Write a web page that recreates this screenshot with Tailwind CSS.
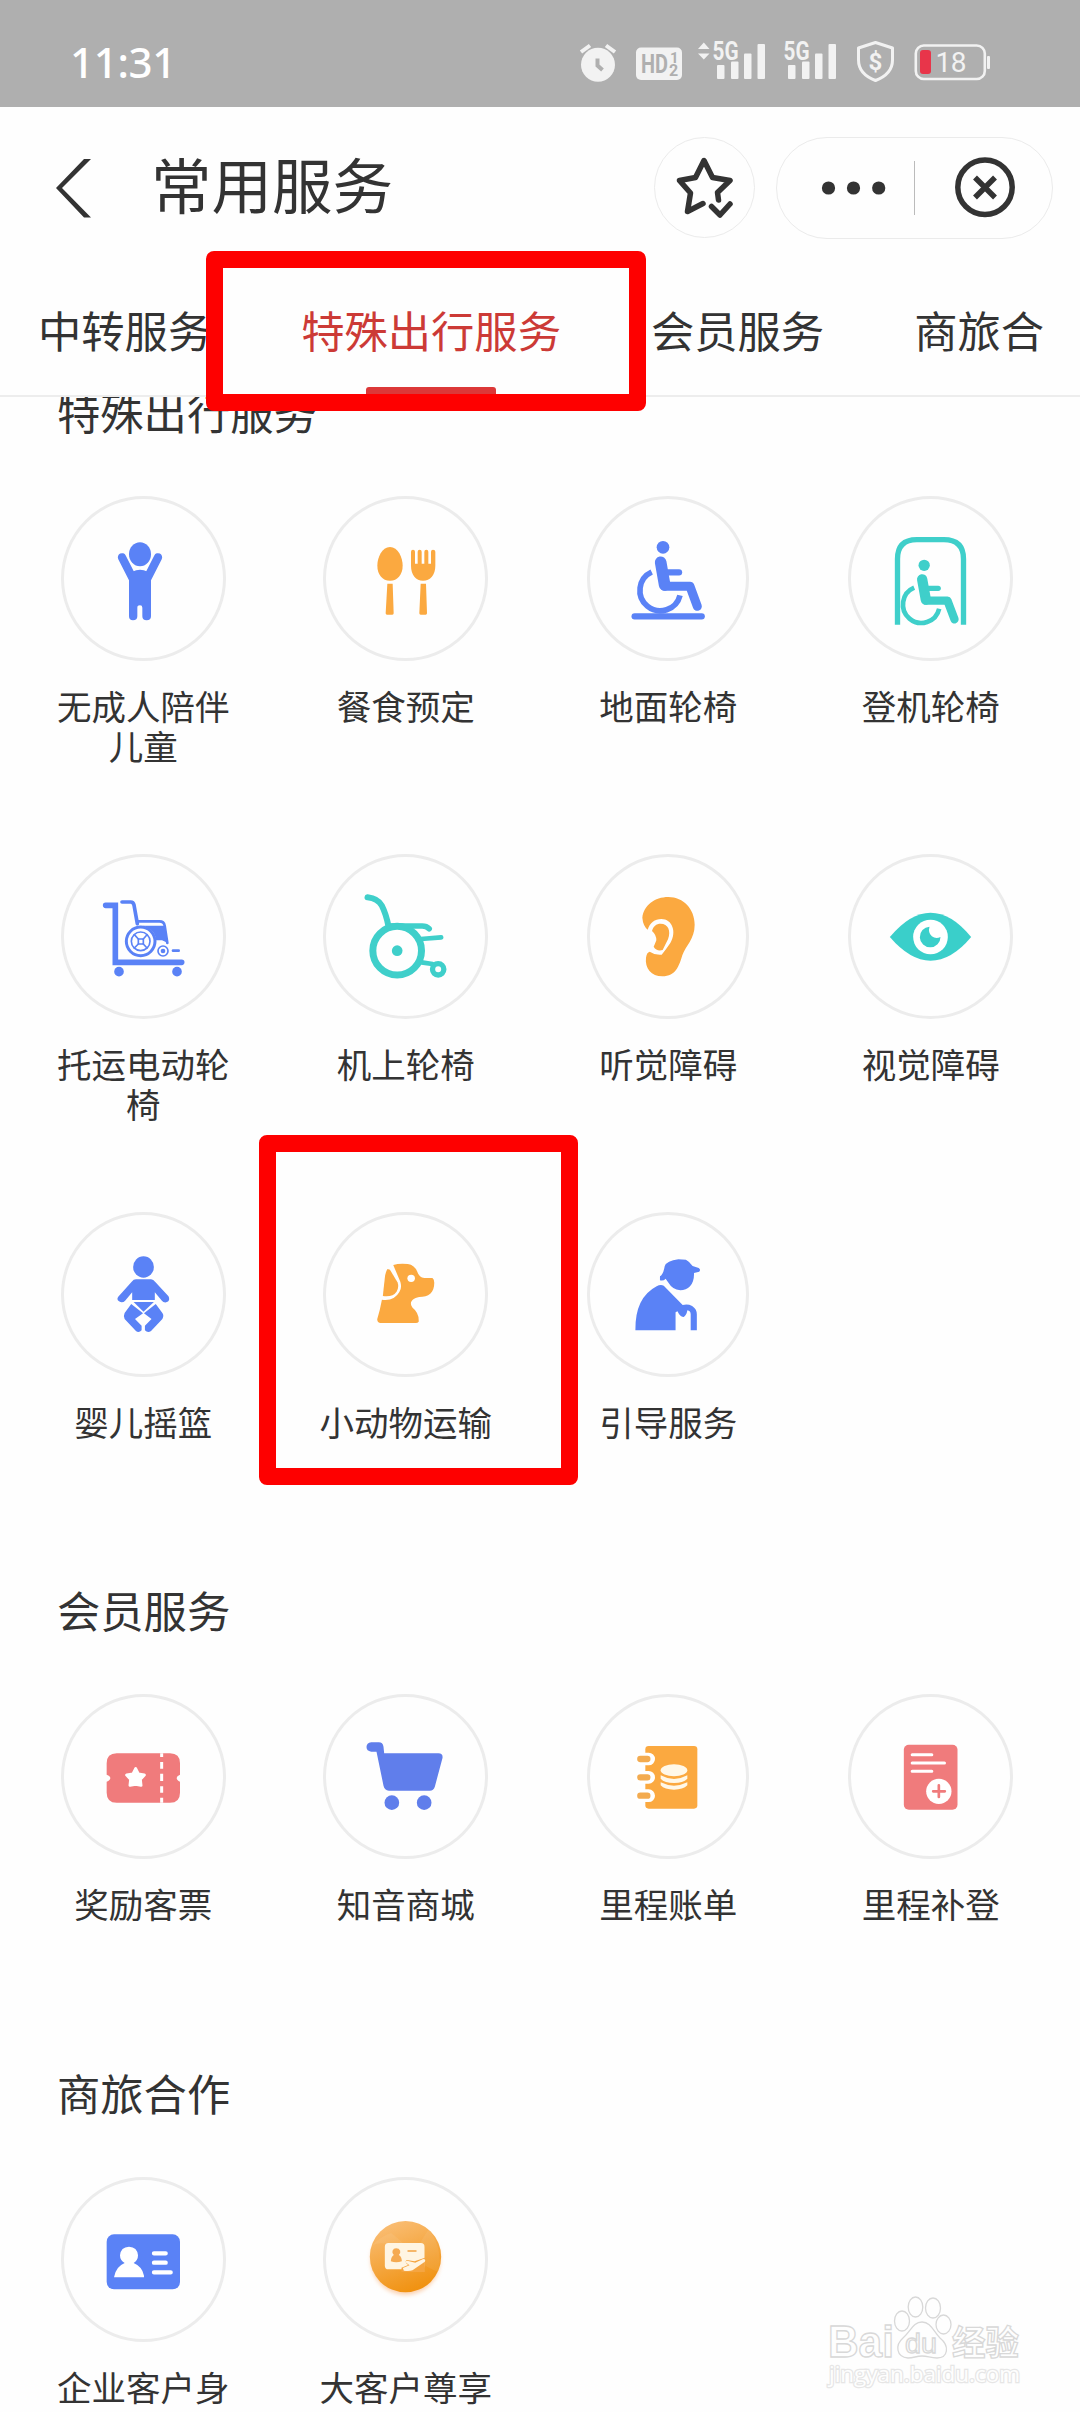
<!DOCTYPE html>
<html lang="zh-CN">
<head>
<meta charset="utf-8">
<title>常用服务</title>
<script src="https://cdn.jsdelivr.net/npm/@tailwindcss/browser@4"></script>
</head>
<body class="bg-white">
<div class="relative flex h-[2412px] w-[1080px] flex-col overflow-hidden bg-[#fefefe] font-['Noto_Sans_CJK_SC',sans-serif] text-[#333]">

  <!-- status bar -->
  <div class="flex h-[107px] w-full shrink-0 items-start justify-between bg-[#afafaf] pl-[70px] pr-[85px] pt-[35px]">
    <span class="font-['Noto_Sans',sans-serif] text-[42px] leading-[54px] font-medium tracking-[-0.3px] text-white">11:31</span>
    <svg class="h-[52px] w-[420px]" viewBox="575 35 420 52" fill="#f2f2f2">
      <circle cx="598" cy="64.7" r="17"/>
      <path d="M581 52 L590 45.500 M606 45.500 L615 52" stroke="#f2f2f2" stroke-width="4" fill="none"/>
      <path d="M597.500 58.500 V65.500 L602.500 70" stroke="#afafaf" stroke-width="4" fill="none"/>
      <rect x="636" y="47.500" width="46" height="32.500" rx="5"/>
      <g fill="#afafaf" font-family="Roboto, sans-serif" font-weight="700">
        <text x="641" y="73" font-size="25" textLength="27" lengthAdjust="spacingAndGlyphs">HD</text>
        <text x="670" y="63" font-size="15">1</text>
        <text x="669" y="76" font-size="16">2</text>
      </g>
      <path d="M698 49 L703.800 42.500 L709.500 49Z M698 53.500 H709.500 L703.800 59.500Z"/>
      <g font-family="Roboto, sans-serif" font-weight="700" font-size="25">
        <text x="712.500" y="60" textLength="26" lengthAdjust="spacingAndGlyphs">5G</text>
        <text x="783.500" y="60" textLength="26" lengthAdjust="spacingAndGlyphs">5G</text>
      </g>
      <rect x="717" y="65" width="7.500" height="14" rx="1"/><rect x="731" y="61.500" width="7.500" height="17.500" rx="1"/><rect x="744" y="53.500" width="7.500" height="25.500" rx="1"/><rect x="757.500" y="44" width="7.500" height="35" rx="1"/>
      <rect x="788" y="65" width="7.500" height="14" rx="1"/><rect x="802" y="61.500" width="7.500" height="17.500" rx="1"/><rect x="815" y="53.500" width="7.500" height="25.500" rx="1"/><rect x="828.500" y="44" width="7.500" height="35" rx="1"/>
      <path d="M875.500 42.500 L892.500 48 V60 Q892.500 74 875.500 80.500 Q858.500 74 858.500 60 V48Z" fill="none" stroke="#f2f2f2" stroke-width="3" stroke-linejoin="round"/>
      <text x="875.500" y="70" text-anchor="middle" font-family="Roboto, sans-serif" font-weight="700" font-size="24">$</text>
      <rect x="915.800" y="45.500" width="69" height="33.500" rx="8" fill="none" stroke="#f2f2f2" stroke-width="2.600"/>
      <rect x="920" y="50" width="11" height="24" rx="3" fill="#e8354a"/>
      <text x="935.500" y="72" font-family="Roboto, sans-serif" font-size="28" textLength="31">18</text>
      <rect x="987" y="56" width="3" height="13" rx="1"/>
    </svg>
  </div>

  <!-- title bar -->
  <div class="flex h-[161px] shrink-0 items-start pt-[30px]">
    <svg class="ml-[55px] mt-[20px] h-[62px] w-[38px]" viewBox="55 157 38 62"><path d="M56 188 L84 159 H91 L62 188 L91 217.500 H84Z" fill="#333"/></svg>
    <h1 class="ml-[58px] mt-[1px] w-[400px] text-[60.500px] leading-[90px] font-normal">常用服务</h1>
    <div class="ml-[103px] h-[101px] w-[101px] rounded-full border border-[#ebebeb]">
      <svg class="h-full w-full" viewBox="655 138 99 99" fill="none" stroke="#333" stroke-width="5.500" stroke-linecap="round" stroke-linejoin="round">
        <path d="M718.500 200 L717.500 192.500 L730 180.500 L712.500 177.500 L704 160.500 L695.500 177.500 L679.500 180.500 L690.500 193 L687.500 211.500 L703 203.500"/>
        <path d="M711.500 206.500 L720 215 L730 204"/>
      </svg>
    </div>
    <div class="ml-[21px] h-[102px] w-[277px] rounded-full border border-[#ebebeb]">
      <svg class="h-full w-full" viewBox="777 138 275 100" fill="#333">
        <circle cx="828.500" cy="188" r="6.600"/><circle cx="853.500" cy="188" r="6.600"/><circle cx="878.700" cy="188" r="6.600"/>
        <path d="M914.500 161 V215" stroke="#bbb" stroke-width="1"/>
        <circle cx="985" cy="187.300" r="27.200" fill="none" stroke="#333" stroke-width="5.500"/>
        <path d="M975 177.500 L995 197.500 M995 177.500 L975 197.500" stroke="#333" stroke-width="5.500"/>
      </svg>
    </div>
  </div>

  <!-- tabs -->
  <div class="h-[129px] shrink-0 border-b-2 border-[#ededed]">
    <div class="flex h-[127px] w-[1043px] gap-[90px] overflow-hidden whitespace-nowrap pl-[38px] pt-[30px] text-[43.300px] leading-[62px]">
      <span class="shrink-0">中转服务</span>
      <span class="flex shrink-0 flex-col items-center justify-between text-[#cc3a36]">特殊出行服务<i class="block h-[8px] w-[130px] rounded-t-[3px] bg-[#dc3838]"></i></span>
      <span class="shrink-0">会员服务</span>
      <span class="shrink-0">商旅合作</span>
    </div>
  </div>

  <!-- scrolled content -->
  <main class="h-[2015px] shrink-0 overflow-hidden">
    <h2 class="-mt-[17px] ml-[57px] h-[64px] text-[43.300px] leading-[62px] font-normal">特殊出行服务</h2>
    <section class="ml-[12px] mt-[52px] grid w-[1050px] auto-rows-[358px] grid-cols-4 text-center text-[34.500px] leading-[40.300px]">
      <div class="flex flex-col items-center gap-[24px]">
        <div class="h-[165px] w-[165px] shrink-0 rounded-full border-[3px] border-[#ececec]"><svg class="h-full w-full" viewBox="72 56 477 477" fill="#5a82f6">
          <ellipse cx="300" cy="222" rx="33" ry="36"/>
          <path d="M246 231 L280 298 M354 231 L320 298" stroke="#5a82f6" stroke-width="25" stroke-linecap="round"/>
          <path d="M267 300 L277 274 Q300 262 323 274 L333 300 V408 Q333 420 320 420 Q307 420 307 408 V382 Q307 375 300 375 Q292 375 292 382 V408 Q292 420 279 420 Q267 420 267 408Z"/>
        </svg></div><p class="w-[176px]">无成人陪伴儿童</p></div>
      <div class="flex flex-col items-center gap-[24px]">
        <div class="h-[165px] w-[165px] shrink-0 rounded-full border-[3px] border-[#ececec]"><svg class="h-full w-full" viewBox="862 56 477 477" fill="#fba940">
          <path d="M1054 200 C1078 200 1092 232 1092 256 C1092 282 1077 301 1054 301 C1031 301 1016 282 1016 256 C1016 232 1030 200 1054 200Z"/>
          <path d="M1046 310 H1062 L1065 399 Q1065 403 1061 403 H1045 Q1041 403 1041 399Z M1146 310 H1162 L1165 399 Q1165 403 1161 403 H1146 Q1142 403 1142 399Z"/>
          <path d="M1117 214 Q1117 208 1123 208 Q1129 208 1129 214 V250 H1137 V214 Q1137 208 1143 208 Q1149 208 1149 214 V250 H1157 V214 Q1157 208 1163 208 Q1169 208 1169 214 V250 H1177 V214 Q1177 208 1183 208 Q1190 208 1190 214 V256 C1190 284 1175 301 1153 301 C1132 301 1117 284 1117 256Z"/>
        </svg></div><p>餐食预定</p></div>
      <div class="flex flex-col items-center gap-[24px]">
        <div class="h-[165px] w-[162px] shrink-0 rounded-[50%] border-[3px] border-[#ececec]"><svg class="h-full w-full" viewBox="91 56 468 477" fill="none" stroke="#5a82f6" stroke-linecap="round" stroke-linejoin="round">
          <circle cx="310" cy="201" r="19" fill="#5a82f6" stroke="none"/>
          <path d="M303 246 L315 314" stroke-width="35"/><path d="M315 318 H391 L413 378" stroke-width="27"/><path d="M325 276 H358" stroke-width="19"/>
          <path d="M276 275 A61 61 0 1 0 361 345" stroke-width="17" stroke-linecap="butt"/>
          <path d="M225 408 H426" stroke-width="19"/>
        </svg></div><p>地面轮椅</p></div>
      <div class="flex flex-col items-center gap-[24px]">
        <div class="h-[165px] w-[165px] shrink-0 rounded-full border-[3px] border-[#ececec]"><svg class="h-full w-full" viewBox="871.500 56 477 477" fill="none" stroke="#3fcfca" stroke-linecap="round" stroke-linejoin="round">
          <path d="M1011 433 V236 Q1011 178 1069 178 H1150 Q1209 178 1209 236 V433" stroke-width="16" stroke-linecap="butt"/>
          <circle cx="1091" cy="255" r="17" fill="#3fcfca" stroke="none"/>
          <path d="M1085 297 L1096 358" stroke-width="31"/><path d="M1097 361 H1161 L1182 417" stroke-width="25"/><path d="M1103 324 H1133" stroke-width="16"/>
          <path d="M1061 322 A55 55 0 1 0 1136 385" stroke-width="14" stroke-linecap="butt"/>
        </svg></div><p>登机轮椅</p></div>

      <div class="flex flex-col items-center gap-[24px]">
        <div class="h-[165px] w-[165px] shrink-0 rounded-full border-[3px] border-[#ececec]"><svg class="h-full w-full" viewBox="72 50 477 477" fill="none" stroke="#5a82f6" stroke-linecap="round" stroke-linejoin="round">
          <path d="M197 195 H226 V366 H425" stroke-width="17" stroke-linejoin="miter"/>
          <circle cx="237" cy="394" r="14.500" fill="#5a82f6" stroke="none"/><circle cx="411" cy="394" r="14.500" fill="#5a82f6" stroke="none"/>
          <path d="M246 185 H272 Q280 185 282 194 L292 250" stroke-width="11"/>
          <path d="M293 243 H358 Q372 243 374 256 L382 308" stroke-width="8"/>
          <path d="M310 256 H372 L384 308 L366 300 H348 Q346 272 322 262Z" fill="#5a82f6" stroke="none"/>
          <circle cx="302" cy="303" r="43" stroke-width="9"/><circle cx="302" cy="303" r="28" stroke-width="5"/>
          <rect x="295" y="296" width="15" height="15" stroke-width="5"/>
          <path d="M283 283 L295 296 M321 283 L310 296 M283 323 L295 311 M321 323 L310 311" stroke-width="5"/>
          <circle cx="369" cy="332" r="15" stroke-width="5"/><circle cx="369" cy="332" r="7" fill="#5a82f6" stroke="none"/>
          <path d="M399 331 H416" stroke-width="8"/>
        </svg></div><p class="w-[176px]">托运电动轮椅</p></div>
      <div class="flex flex-col items-center gap-[24px]">
        <div class="h-[165px] w-[165px] shrink-0 rounded-full border-[3px] border-[#ececec]"><svg class="h-full w-full" viewBox="861.500 50 477 477" fill="none" stroke="#3fcfca" stroke-linecap="round" stroke-linejoin="round">
          <circle cx="1075" cy="331" r="73" stroke-width="21"/><circle cx="1075" cy="331" r="16" fill="#3fcfca" stroke="none"/>
          <path d="M986 171 Q1018 175 1029 196 Q1042 222 1049 258" stroke-width="18"/>
          <path d="M1050 257 H1150 Q1163 257 1171 265" stroke-width="17"/>
          <path d="M1146 296 L1207 291" stroke-width="14"/><path d="M1148 366 L1181 371" stroke-width="14"/>
          <circle cx="1198" cy="387" r="17" stroke-width="16"/>
        </svg></div><p>机上轮椅</p></div>
      <div class="flex flex-col items-center gap-[24px]">
        <div class="h-[165px] w-[162px] shrink-0 rounded-[50%] border-[3px] border-[#ececec]"><svg class="h-full w-full" viewBox="91 50 468 477" fill="#fba940">
          <path d="M248 232 C252 195 285 170 326 170 C372 170 405 207 405 253 C405 297 378 316 368 345 C358 377 349 408 308 408 C275 408 255 383 259 352 Q261 336 270 334 Q286 345 306 343 Q320 326 332 308 C352 275 338 236 305 236 C285 236 271 247 264 268 Q250 256 248 232Z"/>
          <path d="M277 272 C280 258 290 250 303 250 C325 250 335 271 325 297 Q317 313 309 329 Q291 334 282 319 Q286 311 290 300 Q290 283 277 272Z"/>
        </svg></div><p>听觉障碍</p></div>
      <div class="flex flex-col items-center gap-[24px]">
        <div class="h-[165px] w-[165px] shrink-0 rounded-full border-[3px] border-[#ececec]"><svg class="h-full w-full" viewBox="871.500 50 477 477" fill="#3acfca">
          <path d="M988 290 Q1049 217 1110 217 Q1173 217 1232 290 Q1173 361 1110 361 Q1049 361 988 290Z"/>
          <circle cx="1110" cy="290" r="52" fill="#fff"/>
          <path d="M1107 259 A31 31 0 1 0 1140 290 Q1126 297 1114 288 Q1102 277 1107 259Z"/>
        </svg></div><p>视觉障碍</p></div>

      <div class="flex flex-col items-center gap-[24px]">
        <div class="h-[165px] w-[165px] shrink-0 rounded-full border-[3px] border-[#ececec]"><svg class="h-full w-full" viewBox="50.500 284 337 477" preserveAspectRatio="none" fill="#5a82f6">
          <ellipse cx="219" cy="440" rx="22" ry="32"/>
          <path d="M203 477 H235 Q240 477 244 485 L272 528 Q277 542 267 546 Q261 547 258 541 L243 516 V539 H195 V516 L180 541 Q176 547 170 545 Q161 540 165 530 L194 484 Q198 477 203 477Z"/>
          <path d="M198 545 H241 L219 574Z"/>
          <path d="M193 551 L218 579 L201 596 L215 616 V630 Q209 639 203 632 L179 596 Q176 586 179 578Z M245 551 L220 579 L236 596 L222 616 V630 Q228 639 235 632 L259 596 Q263 586 259 578Z"/>
        </svg></div><p>婴儿摇篮</p></div>
      <div class="flex flex-col items-center gap-[24px]">
        <div class="h-[165px] w-[165px] shrink-0 rounded-full border-[3px] border-[#ececec]"><svg class="h-full w-full" viewBox="608.500 284 337 477" preserveAspectRatio="none" fill="#fba940">
          <path d="M739 446 L744 448 L760 486 Q764 500 758 514 Q750 531 729 527 Q732 486 734 464 Q736 451 739 446Z"/>
          <path d="M751 434 Q764 428 782 431 Q796 434 802 454 Q806 472 817 473 H834 Q838 476 838 487 C838 518 826 529 806 530 C790 534 784 548 792 562 Q806 577 805 604 Q803 608 799 608 H723 Q717 606 717 597 Q723 569 727 538 Q753 543 764 515 Q770 503 766 484Z"/>
          <ellipse cx="789" cy="474" rx="8" ry="11" fill="#fff"/>
        </svg></div><p>小动物运输</p></div>
      <div class="flex flex-col items-center gap-[24px]">
        <div class="h-[165px] w-[162px] shrink-0 rounded-[50%] border-[3px] border-[#ececec]"><svg class="h-full w-full" viewBox="1167 284 330 477" preserveAspectRatio="none" fill="#5a82f6">
          <path d="M1325 438 Q1329 421 1354 417 L1370 418 Q1377 423 1384 437 L1397 443 Q1402 449 1398 454 L1387 458 C1388 492 1375 509 1358 510 Q1341 507 1333 487 L1327 475 Q1322 483 1315 480 L1315 468 Q1322 463 1325 438Z"/>
          <path d="M1308 498 Q1316 491 1323 496 L1363 554 Q1374 550 1383 557 Q1393 566 1393 582 V630 H1380 V582 Q1380 572 1373 570 Q1371 586 1365 590 Q1358 591 1352 573 L1348 576 V630 H1263 Q1262 532 1308 498Z"/>
        </svg></div><p>引导服务</p></div>
    </section>

    <h2 class="ml-[57px] mt-[8px] h-[64px] text-[43.300px] leading-[62px] font-normal">会员服务</h2>
    <section class="ml-[12px] mt-[52px] grid h-[358px] w-[1050px] grid-cols-4 text-center text-[34.500px] leading-[40.300px]">
      <div class="flex flex-col items-center gap-[24px]">
        <div class="h-[165px] w-[165px] shrink-0 rounded-full border-[3px] border-[#ececec]"><svg class="h-full w-full" viewBox="72 350 477 477">
          <path d="M230 519 H390 Q420 519 420 549 V583 Q410 587 410 593 Q410 600 420 604 V637 Q420 667 390 667 H230 Q200 667 200 637 V604 Q211 600 211 593 Q211 587 200 583 V549 Q200 519 230 519Z" fill="#f07b7c"/>
          <path d="M287 565 L295 581 L313 584 L301 597 L303 615 L287 612 L270 615 L272 597 L260 584 L279 581Z" fill="#fff" stroke="#fff" stroke-width="9" stroke-linejoin="round"/>
          <path d="M365 519 V530 M365 545 V565 M365 580 V602 M365 618 V637 M365 652 V667" stroke="#fff" stroke-width="9"/>
        </svg></div><p>奖励客票</p></div>
      <div class="flex flex-col items-center gap-[24px]">
        <div class="h-[165px] w-[165px] shrink-0 rounded-full border-[3px] border-[#ececec]"><svg class="h-full w-full" viewBox="861.500 350 477 477" fill="#607eeb">
          <path d="M997 486 H1020 Q1032 486 1034 499 L1036 519 H1199 Q1213 519 1211 533 L1188 619 Q1184 631 1173 631 H1050 Q1037 629 1034 616 L1013 514 H997 Q983 512 983 500 Q983 488 997 486Z"/>
          <circle cx="1059" cy="667" r="22"/><circle cx="1156" cy="667" r="22"/>
        </svg></div><p>知音商城</p></div>
      <div class="flex flex-col items-center gap-[24px]">
        <div class="h-[165px] w-[162px] shrink-0 rounded-[50%] border-[3px] border-[#ececec]"><svg class="h-full w-full" viewBox="91 50 468 477">
          <rect x="257" y="197" width="156" height="188" rx="10" fill="#fba940"/>
          <path d="M240 236 H267 M240 291 H267 M240 346 H267" stroke="#fff" stroke-width="38" stroke-linecap="round"/>
          <path d="M242 236 H263 M242 291 H263 M242 346 H263" stroke="#f3ab50" stroke-width="19" stroke-linecap="round"/>
          <g fill="#fff8e8"><ellipse cx="343" cy="270" rx="40" ry="18"/><path d="M303 285 Q343 307 383 285 V295 Q370 308 343 308 Q315 308 303 295Z M303 306 Q343 326 383 306 V315 Q370 328 343 328 Q315 328 303 315Z"/></g>
        </svg></div><p>里程账单</p></div>
      <div class="flex flex-col items-center gap-[24px]">
        <div class="h-[165px] w-[165px] shrink-0 rounded-full border-[3px] border-[#ececec]"><svg class="h-full w-full" viewBox="871.500 50 477 477">
          <rect x="1030" y="193" width="161" height="195" rx="15" fill="#f07b7c"/>
          <path d="M1055 223 H1114 M1055 248 H1152 M1055 273 H1114" stroke="#fff" stroke-width="9" stroke-linecap="round"/>
          <circle cx="1135" cy="333" r="38" fill="#fff"/><path d="M1118 333 H1153 M1135 315 V350" stroke="#f07b7c" stroke-width="8" stroke-linecap="round"/>
        </svg></div><p>里程补登</p></div>
    </section>

    <h2 class="ml-[57px] mt-[9px] h-[64px] text-[43.300px] leading-[62px] font-normal">商旅合作</h2>
    <section class="ml-[12px] mt-[52px] grid w-[1050px] grid-cols-4 text-center text-[34.500px] leading-[40.300px]">
      <div class="flex flex-col items-center gap-[24px]">
        <div class="h-[165px] w-[165px] shrink-0 rounded-full border-[3px] border-[#ececec]"><svg class="h-full w-full" viewBox="72 389 477 477">
          <rect x="200" y="552" width="220" height="165" rx="22" fill="#5a82f6"/>
          <path d="M222 681 Q227 649 254 638 Q240 630 240 615 Q242 590 267 589 Q292 590 294 615 Q294 630 281 638 Q307 649 312 676 V681Z" fill="#fff"/>
          <path d="M342 609 H377 M342 637 H377 M342 666 H392" stroke="#fff" stroke-width="13" stroke-linecap="round"/>
        </svg></div><p>企业客户身</p></div>
      <div class="flex flex-col items-center gap-[24px]">
        <div class="h-[165px] w-[165px] shrink-0 rounded-full border-[3px] border-[#ececec]"><svg class="h-full w-full" viewBox="861.500 389 477 477">
          <defs><linearGradient id="gold" x1="0.200" y1="0" x2="0.600" y2="1"><stop offset="0" stop-color="#fabf78"/><stop offset="1" stop-color="#f0910f"/></linearGradient>
          <filter id="glow" x="-20%" y="-20%" width="140%" height="140%"><feGaussianBlur stdDeviation="7"/></filter></defs>
          <circle cx="1100" cy="630" r="104" fill="#fbd0ae" filter="url(#glow)"/>
          <circle cx="1100" cy="619" r="107" fill="url(#gold)"/>
          <path d="M1000 585 Q1030 555 1057 548 Q1105 585 1140 630 Q1165 655 1200 665 Q1212 590 1170 538 Q1150 560 1120 630 Q1050 560 1000 585Z" fill="#fff" fill-opacity="0.070"/>
          <rect x="1038" y="578" width="119" height="79" rx="11" fill="#fff5e2"/>
          <path d="M1056 633 Q1057 618 1065 614 Q1059 607 1061 601 Q1064 594 1072 594 Q1081 594 1084 601 Q1086 608 1080 614 Q1089 619 1089 633Q1072 639 1056 633Z" fill="#f5aa51"/>
          <path d="M1106 602 H1133" stroke="#f5aa51" stroke-width="5"/>
          <path d="M1088 660 V652 L1108 644 Q1095 634 1104 629 L1127 633 L1158 622 V665 H1088Z" fill="#f5a541"/>
          <path d="M1092 653 L1112 645 L1100 636 Q1100 630 1108 632 L1129 637 L1153 626 Q1162 627 1158 634 L1121 660 Q1110 664 1095 661Z" fill="#fff5e2"/>
        </svg></div><p>大客户尊享</p></div>
    </section>
  </main>

  <!-- highlight frames -->
  <div class="absolute left-[206px] top-[251px] h-[160px] w-[440px] rounded-[8px] border-[17px] border-[#fe0000]"></div>
  <div class="absolute left-[259px] top-[1135px] h-[350px] w-[319px] rounded-[8px] border-[17px] border-[#fe0000]"></div>

  <!-- watermark -->
  <svg class="absolute left-[820px] top-[2290px] h-[105px] w-[210px]" viewBox="820 2290 210 105" fill="#fefefe" stroke="#d8d8d8" stroke-width="1.300">
    <g font-family="Liberation Sans, sans-serif" font-weight="700">
      <text x="828" y="2357" font-size="44" textLength="66" lengthAdjust="spacingAndGlyphs">Bai</text>
    </g>
    <ellipse cx="902" cy="2321" rx="7.500" ry="10"/><ellipse cx="915.500" cy="2307" rx="7.300" ry="10"/><ellipse cx="933" cy="2308" rx="7.500" ry="10"/><ellipse cx="943.500" cy="2324.500" rx="7.500" ry="9.500"/>
    <path d="M922 2322 C931 2322 933 2331 940 2338 C950 2346 948 2358 937 2358 C930 2358 928 2356 922 2356 C916 2356 914 2358 908 2358 C896 2357 895 2345 903 2338 C911 2331 913 2322 922 2322Z"/>
    <text x="905" y="2353" font-family="Liberation Sans, sans-serif" font-size="27" textLength="32" lengthAdjust="spacingAndGlyphs">du</text>
    <text x="952" y="2355" font-family="Noto Sans CJK SC, sans-serif" font-weight="700" font-size="34" textLength="67" lengthAdjust="spacingAndGlyphs">经验</text>
    <text x="829" y="2382" font-family="Open Sans, sans-serif" font-size="22.500" textLength="191" lengthAdjust="spacingAndGlyphs" stroke-width="2.500" stroke="#e6e6e6" paint-order="stroke">jingyan.baidu.com</text>
  </svg>
</div>
</body>
</html>
